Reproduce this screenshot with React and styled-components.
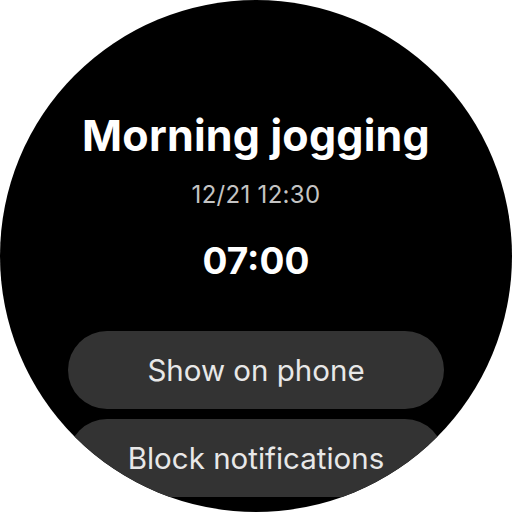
import React from "react";
import styled, { createGlobalStyle } from "styled-components";

const Global = createGlobalStyle`
  html, body { margin: 0; padding: 0; background: #ffffff; }
  body { font-family: "Inter", "Roboto", sans-serif; }
`;

const Watch = styled.div`
  width: 512px;
  height: 512px;
  border-radius: 50%;
  background: #000000;
  overflow: hidden;
  display: flex;
  flex-direction: column;
  align-items: center;
  box-sizing: border-box;
  padding-top: 110px;
`;

const Title = styled.div`
  color: #ffffff;
  font-size: 43px;
  font-weight: 700;
  line-height: 50px;
  letter-spacing: 0.2px;
`;

const DateText = styled.div`
  margin-top: 21px;
  color: #c4c4c4;
  font-size: 24px;
  line-height: 28px;
  font-weight: 400;
  letter-spacing: 0.3px;
`;

const Duration = styled.div`
  margin-top: 30px;
  color: #ffffff;
  font-size: 37px;
  font-weight: 700;
  line-height: 44px;
`;

const Actions = styled.div`
  margin-top: 48px;
  display: flex;
  flex-direction: column;
  gap: 10px;
  width: 376px;
`;

const ActionButton = styled.button`
  height: 78px;
  border: none;
  border-radius: 39px;
  background: #333333;
  color: #e8e8e8;
  font-family: inherit;
  font-size: 29.5px;
  font-weight: 400;
  display: flex;
  align-items: center;
  justify-content: center;
  padding: 0 0 1px;
  cursor: pointer;
`;

export default function App() {
  return (
    <>
      <Global />
      <Watch>
        <Title>Morning jogging</Title>
        <DateText>12/21 12:30</DateText>
        <Duration>07:00</Duration>
        <Actions>
          <ActionButton>Show on phone</ActionButton>
          <ActionButton>Block notifications</ActionButton>
        </Actions>
      </Watch>
    </>
  );
}
